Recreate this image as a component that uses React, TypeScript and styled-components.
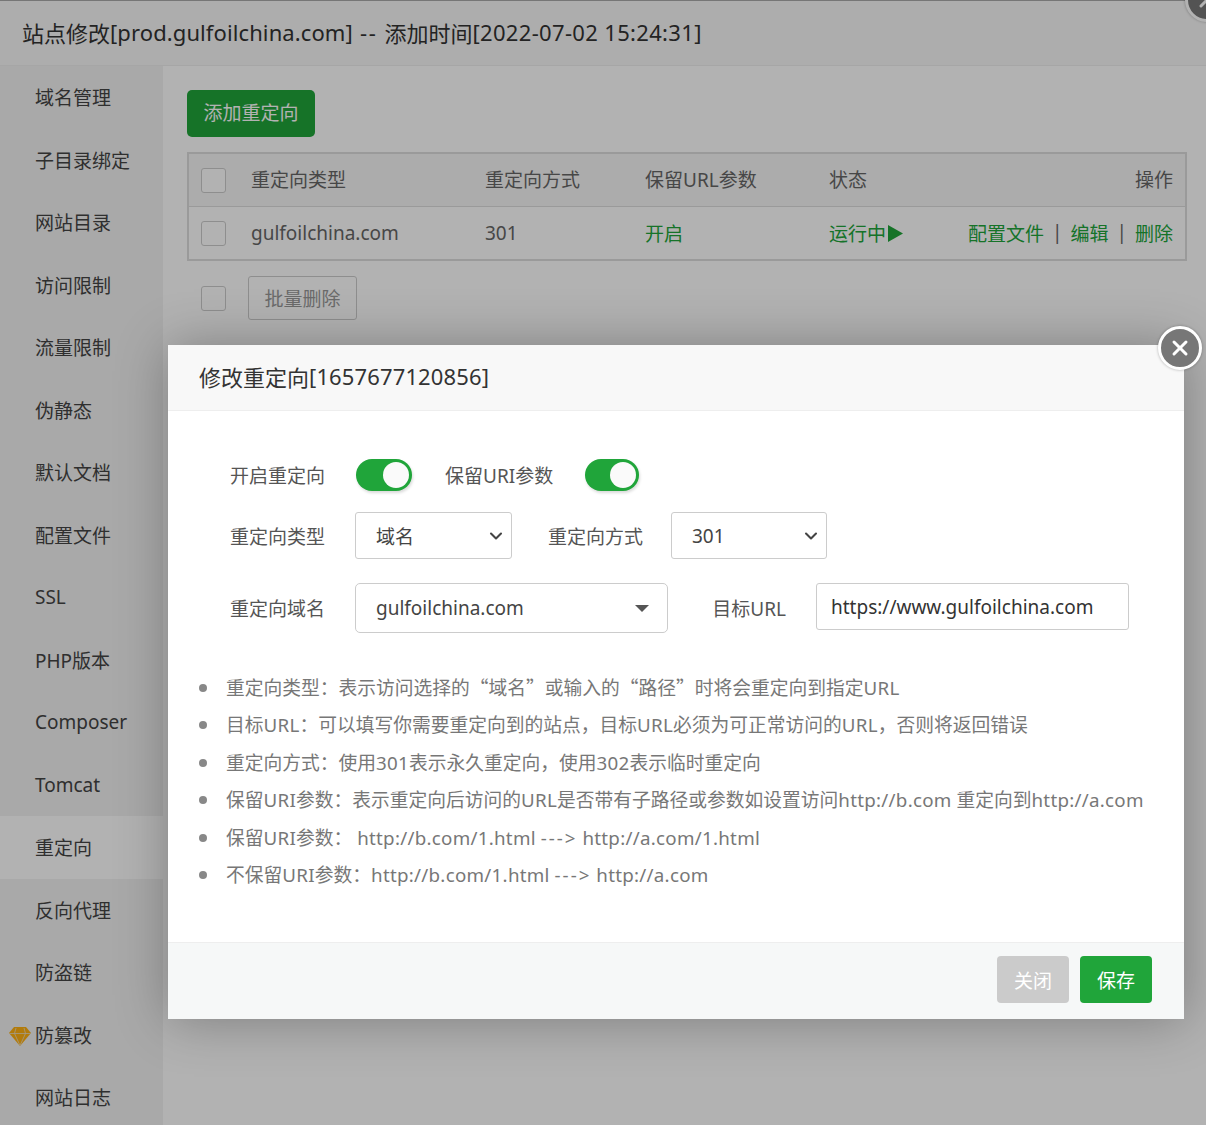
import * as React from "react";
import styled, { createGlobalStyle } from "styled-components";
import { ChevronDown, X } from "lucide-react";

const GlobalStyle = createGlobalStyle`
  html, body {
    margin: 0;
    padding: 0;
    background: #fff;
  }
  body {
    font-family: "Noto Sans", "Noto Sans CJK SC", sans-serif;
    font-size: 19px;
    color: #555;
  }
  * {
    box-sizing: border-box;
  }
`;

const Page = styled.div`
  position: relative;
  width: 1206px;
  height: 1125px;
  overflow: hidden;
  background: #fff;
`;

// the site settings window behind the dialog
const Window = styled.div`
  width: 100%;
  height: 100%;
  border-top: 1px solid #aaa;
  display: flex;
  flex-direction: column;
`;

const WindowTitle = styled.div`
  height: 65px;
  flex: none;
  padding: 0 0 3px 22px;
  display: flex;
  align-items: center;
  font-size: 22px;
  color: #333;
  background: #f8f8f8;
  border-bottom: 1px solid #eee;
  white-space: pre;
`;

// latin runs are a little wider in the reference than in Noto Sans
const Spaced = styled.span<{ $gap: number }>`
  letter-spacing: ${(p) => p.$gap}px;
`;

const WindowBody = styled.div`
  flex: 1;
  display: flex;
`;

const Sidebar = styled.div`
  width: 163px;
  flex: none;
  background: #f2f2f2;
`;

const SideItem = styled.div<{ $active?: boolean }>`
  position: relative;
  height: 62.5px;
  padding-left: 35px;
  display: flex;
  align-items: center;
  color: #444;
  background: ${(p) => (p.$active ? "#fff" : "transparent")};
`;

const Gem = styled.svg`
  position: absolute;
  left: 9px;
  top: 23px;
  width: 22px;
  height: 19px;
`;

const Content = styled.div`
  flex: 1;
  padding: 24px 19px 0 24px;
`;

const AddButton = styled.div`
  width: 128px;
  height: 47px;
  padding-bottom: 3px;
  border-radius: 5px;
  display: flex;
  align-items: center;
  justify-content: center;
  color: #fff;
  background: #20a53a;
`;

const Table = styled.div`
  margin-top: 15px;
  width: 1000px;
  border: 2px solid #ddd;
`;

const Row = styled.div<{ $head?: boolean }>`
  height: ${(p) => (p.$head ? "53px" : "52px")};
  padding: 0 12px 0 12px;
  display: grid;
  grid-template-columns: 50px 234px 160px 184px 79px 1fr;
  align-items: center;
  color: #666;
  white-space: nowrap;
  background: ${(p) => (p.$head ? "#f6f6f6" : "transparent")};
  border-bottom: ${(p) => (p.$head ? "1px solid #ddd" : "none")};
`;

const HeadCell = styled.span`
  padding-bottom: 3px;
`;

const Check = styled.span`
  display: block;
  width: 25px;
  height: 25px;
  border: 1px solid #ccc;
  border-radius: 3px;
  background: #fff;
`;

const Green = styled.span`
  color: #20a53a;
  white-space: nowrap;
`;

const Actions = styled.div`
  display: flex;
  justify-content: flex-end;
  white-space: nowrap;
`;

const Divider = styled.span`
  margin: 0 8px;
  color: #666;
`;

const Play = styled.svg`
  width: 17px;
  height: 17px;
  margin-left: 1px;
  vertical-align: -1px;
`;

const BatchRow = styled.div`
  margin-top: 15px;
  padding-left: 14px;
  display: flex;
  align-items: center;
  gap: 22px;
`;

const BatchButton = styled.div`
  width: 109px;
  height: 44px;
  border: 1px solid #ccc;
  border-radius: 3px;
  display: flex;
  align-items: center;
  justify-content: center;
  color: #999;
`;

const Mask = styled.div`
  position: absolute;
  inset: 0;
  background: rgba(0, 0, 0, 0.3);
`;

const CloseBadge = styled.div<{ $top: number; $left: number }>`
  position: absolute;
  top: ${(p) => p.$top}px;
  left: ${(p) => p.$left}px;
  width: 44px;
  height: 44px;
  border-radius: 50%;
  border: 3px solid #fff;
  background: #777;
  color: #fff;
  display: flex;
  align-items: center;
  justify-content: center;
  box-shadow: 0 0 3px rgba(0, 0, 0, 0.3);
`;

const Dialog = styled.div`
  position: absolute;
  left: 168px;
  top: 345px;
  width: 1016px;
  height: 674px;
  display: flex;
  flex-direction: column;
  background: #fff;
  box-shadow: 1px 1px 50px rgba(0, 0, 0, 0.3);
`;

const DialogTitle = styled.div`
  height: 66px;
  flex: none;
  padding: 0 0 3px 31px;
  display: flex;
  align-items: center;
  font-size: 22px;
  color: #333;
  background: #f8f8f8;
  border-bottom: 1px solid #eee;
`;

const DialogBody = styled.div`
  flex: 1;
  padding: 48px 0 0;
`;

const FormRow = styled.div<{ $height: number; $mb: number }>`
  height: ${(p) => p.$height}px;
  margin-bottom: ${(p) => p.$mb}px;
  display: flex;
  align-items: center;
  color: #555;
`;

const Label = styled.div<{ $width: number; $ml: number }>`
  width: ${(p) => p.$width}px;
  margin-left: ${(p) => p.$ml}px;
  flex: none;
  text-align: right;
  white-space: nowrap;
`;

const Switch = styled.div<{ $width: number; $ml: number }>`
  position: relative;
  width: ${(p) => p.$width}px;
  height: 32px;
  margin-left: ${(p) => p.$ml}px;
  flex: none;
  border-radius: 16px;
  background: #20a53a;
  box-shadow: 1px 2px 3px rgba(0, 0, 0, 0.15);

  &::after {
    content: "";
    position: absolute;
    top: 3px;
    right: 3px;
    width: 26px;
    height: 26px;
    border-radius: 50%;
    background: #fafafa;
  }
`;

const Select = styled.div<{ $width: number; $height: number; $ml: number; $radius: number }>`
  width: ${(p) => p.$width}px;
  height: ${(p) => p.$height}px;
  margin-left: ${(p) => p.$ml}px;
  flex: none;
  padding: 0 5px 0 20px;
  display: flex;
  align-items: center;
  justify-content: space-between;
  border: 1px solid #ccc;
  border-radius: ${(p) => p.$radius}px;
  color: #444;
`;

const Caret = styled.span`
  width: 0;
  height: 0;
  margin-right: 13px;
  border-left: 7px solid transparent;
  border-right: 7px solid transparent;
  border-top: 7px solid #555;
`;

const TextField = styled.div`
  width: 313px;
  height: 47px;
  margin: 0 0 3px 30px;
  flex: none;
  padding-left: 14px;
  display: flex;
  align-items: center;
  border: 1px solid #ccc;
  border-radius: 3px;
  color: #333;
`;

const Notes = styled.ul`
  margin: 34.7px 0 0;
  padding: 0 0 0 31px;
  list-style: none;
  color: #777;
  font-size: 18.75px;
`;

const Note = styled.li`
  height: 37.5px;
  display: flex;
  align-items: center;
  gap: 19px;
  white-space: pre;

  &::before {
    content: "";
    width: 8px;
    height: 8px;
    margin-top: 3px;
    flex: none;
    border-radius: 50%;
    background: #888;
  }
`;

// curly quotes come out full width in the reference, so keep them in the CJK face
const Quote = styled.span`
  font-family: "Noto Sans CJK SC", sans-serif;
`;

const DialogFoot = styled.div`
  height: 77px;
  flex: none;
  padding: 13px 32px 0 0;
  display: flex;
  justify-content: flex-end;
  gap: 11px;
  background: #f6f8f8;
  border-top: 1px solid #eee;
`;

const FootButton = styled.div<{ $primary?: boolean }>`
  width: 72px;
  height: 47px;
  border-radius: 4px;
  display: flex;
  align-items: center;
  justify-content: center;
  color: #fff;
  background: ${(p) => (p.$primary ? "#20a53a" : "#cbcbcb")};
`;

const menu = [
  "域名管理",
  "子目录绑定",
  "网站目录",
  "访问限制",
  "流量限制",
  "伪静态",
  "默认文档",
  "配置文件",
  "SSL",
  "PHP版本",
  "Composer",
  "Tomcat",
  "重定向",
  "反向代理",
  "防盗链",
  "防篡改",
  "网站日志",
];

const notes = [
  "重定向类型：表示访问选择的“域名”或输入的“路径”时将会重定向到指定URL",
  "目标URL：可以填写你需要重定向到的站点，目标URL必须为可正常访问的URL，否则将返回错误",
  "重定向方式：使用301表示永久重定向，使用302表示临时重定向",
  "保留URI参数：表示重定向后访问的URL是否带有子路径或参数如设置访问http://b.com 重定向到http://a.com",
  "保留URI参数： http://b.com/1.html ---> http://a.com/1.html",
  "不保留URI参数：http://b.com/1.html ---> http://a.com",
];

const renderNote = (note: string) =>
  note.split(/([“”]|--->|[!-~]+)/).map((part, i) => {
    if (part === "“" || part === "”") return <Quote key={i}>{part}</Quote>;
    if (part === "--->") return <Spaced key={i} $gap={2}>{part}</Spaced>;
    if (/^[!-~]+$/.test(part)) return <Spaced key={i} $gap={0.27}>{part}</Spaced>;
    return part;
  });

const App = () => {
  return (
    <Page>
      <GlobalStyle />
      <Window>
        <WindowTitle>
          站点修改
          <Spaced $gap={0.1}>[prod.gulfoilchina.com]</Spaced>
          <Spaced $gap={1.5}> -- </Spaced>
          添加时间
          <Spaced $gap={0.33}>[2022-07-02 15:24:31]</Spaced>
        </WindowTitle>
        <WindowBody>
          <Sidebar>
            {menu.map((item) => (
              <SideItem key={item} $active={item === "重定向"}>
                {item === "防篡改" && (
                  <Gem viewBox="0 0 22 19">
                    <path d="M5 0h12l5 6L11 19 0 6z" fill="#ffb010" />
                    <path d="M0.5 6.5h21M7 1L5.5 6.5 11 18.5 16.5 6.5 15 1" fill="none" stroke="#e8e0c8" strokeWidth="0.8" />
                  </Gem>
                )}
                {item}
              </SideItem>
            ))}
          </Sidebar>
          <Content>
            <AddButton>添加重定向</AddButton>
            <Table>
              <Row $head>
                <Check />
                <HeadCell>重定向类型</HeadCell>
                <HeadCell>重定向方式</HeadCell>
                <HeadCell>保留URL参数</HeadCell>
                <HeadCell>状态</HeadCell>
                <Actions>
                  <HeadCell>操作</HeadCell>
                </Actions>
              </Row>
              <Row>
                <Check />
                <span>gulfoilchina.com</span>
                <span>301</span>
                <Green>开启</Green>
                <Green>
                  运行中
                  <Play viewBox="0 0 17 17">
                    <path d="M1 0l15 8.5L1 17z" fill="#20a53a" />
                  </Play>
                </Green>
                <Actions>
                  <Green>配置文件</Green>
                  <Divider>|</Divider>
                  <Green>编辑</Green>
                  <Divider>|</Divider>
                  <Green>删除</Green>
                </Actions>
              </Row>
            </Table>
            <BatchRow>
              <Check />
              <BatchButton>批量删除</BatchButton>
            </BatchRow>
          </Content>
        </WindowBody>
      </Window>
      <CloseBadge $top={-22} $left={1185}>
        <X size={24} strokeWidth={3} />
      </CloseBadge>
      <Mask />
      <Dialog>
        <DialogTitle>
          修改重定向
          <Spaced $gap={0.13}>[1657677120856]</Spaced>
        </DialogTitle>
        <DialogBody>
          <FormRow $height={32} $mb={21}>
            <Label $width={95} $ml={62}>开启重定向</Label>
            <Switch $width={56} $ml={31} />
            <Label $width={108} $ml={33}>保留URI参数</Label>
            <Switch $width={54} $ml={32} />
          </FormRow>
          <FormRow $height={47} $mb={24}>
            <Label $width={95} $ml={62}>重定向类型</Label>
            <Select $width={157} $height={47} $ml={30} $radius={3}>
              域名
              <ChevronDown size={20} strokeWidth={2.5} />
            </Select>
            <Label $width={95} $ml={36}>重定向方式</Label>
            <Select $width={156} $height={47} $ml={28} $radius={3}>
              301
              <ChevronDown size={20} strokeWidth={2.5} />
            </Select>
          </FormRow>
          <FormRow $height={50} $mb={0}>
            <Label $width={95} $ml={62}>重定向域名</Label>
            <Select $width={313} $height={50} $ml={30} $radius={5}>
              gulfoilchina.com
              <Caret />
            </Select>
            <Label $width={74} $ml={44}>目标URL</Label>
            <TextField>https://www.gulfoilchina.com</TextField>
          </FormRow>
          <Notes>
            {notes.map((note) => (
              <Note key={note}>
                <span>{renderNote(note)}</span>
              </Note>
            ))}
          </Notes>
        </DialogBody>
        <DialogFoot>
          <FootButton>关闭</FootButton>
          <FootButton $primary>保存</FootButton>
        </DialogFoot>
      </Dialog>
      <CloseBadge $top={326} $left={1158}>
        <X size={24} strokeWidth={3} />
      </CloseBadge>
    </Page>
  );
};

export default App;
